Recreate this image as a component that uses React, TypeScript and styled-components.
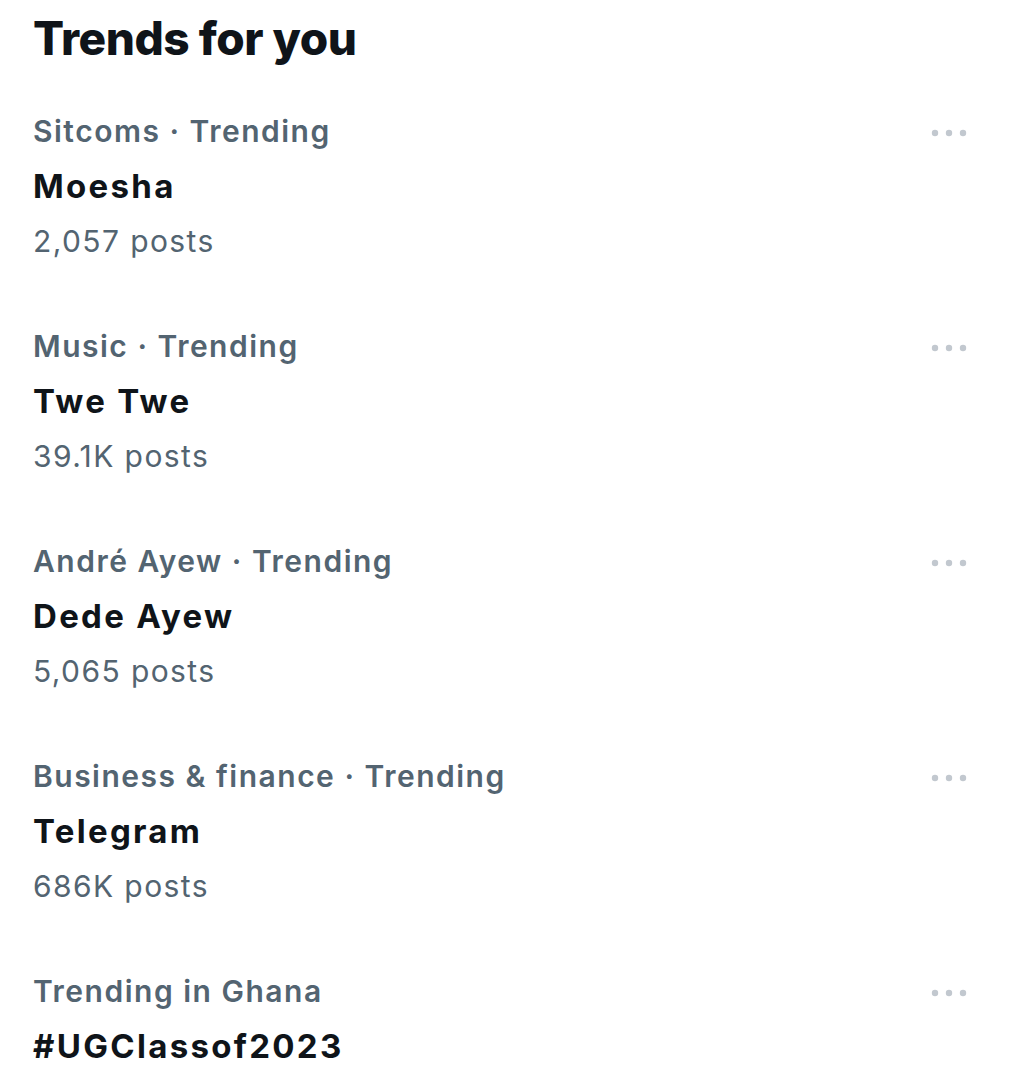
import React from "react";
import styled, { createGlobalStyle } from "styled-components";

const Global = createGlobalStyle`
  html, body { margin: 0; padding: 0; background: #ffffff; }
  body { font-family: Inter, "Noto Sans", "Liberation Sans", sans-serif; -webkit-font-smoothing: antialiased; }
`;

const Page = styled.div`
  display: flex;
  flex-direction: column;
  padding: 10px 56px 0 33px;
  width: 1024px;
  box-sizing: border-box;
  background: #ffffff;
`;

const Title = styled.h2`
  margin: 0 0 13px;
  font-size: 46px;
  line-height: 56px;
  font-weight: 800;
  color: #0f1419;
  letter-spacing: -0.5px;
`;

const List = styled.div`
  display: flex;
  flex-direction: column;
`;

const Trend = styled.div`
  display: flex;
  align-items: flex-start;
  justify-content: space-between;
  padding: 25px 0;
`;

const Body = styled.div`
  display: flex;
  flex-direction: column;
`;

const Line = styled.div<{ $kind: "meta" | "name" | "count" }>`
  line-height: 55px;
  white-space: nowrap;
  font-size: ${(p) => (p.$kind === "name" ? "33px" : "30px")};
  font-weight: ${(p) => (p.$kind === "name" ? 700 : p.$kind === "meta" ? 600 : 400)};
  letter-spacing: ${(p) => (p.$kind === "name" ? "2.3px" : p.$kind === "meta" ? "1.5px" : "1.4px")};
  color: ${(p) => (p.$kind === "name" ? "#0f1419" : "#536471")};
`;

const More = styled.div`
  height: 55px;
  display: flex;
  align-items: center;
  padding-top: 2px;
  box-sizing: border-box;
`;

const Dots = () => (
  <svg width="38" height="10" viewBox="0 0 38 10" aria-hidden="true">
    <circle cx="5" cy="5" r="3.2" fill="#c2c8cf" />
    <circle cx="19" cy="5" r="3.2" fill="#c2c8cf" />
    <circle cx="33" cy="5" r="3.2" fill="#c2c8cf" />
  </svg>
);

const trends = [
  { meta: "Sitcoms · Trending", name: "Moesha", count: "2,057 posts" },
  { meta: "Music · Trending", name: "Twe Twe", count: "39.1K posts" },
  { meta: "André Ayew · Trending", name: "Dede Ayew", count: "5,065 posts" },
  { meta: "Business & finance · Trending", name: "Telegram", count: "686K posts" },
  { meta: "Trending in Ghana", name: "#UGClassof2023", count: "" },
];

export default function App() {
  return (
    <>
      <Global />
      <Page>
        <Title>Trends for you</Title>
        <List>
          {trends.map((t) => (
            <Trend key={t.name}>
              <Body>
                <Line $kind="meta">{t.meta}</Line>
                <Line $kind="name">{t.name}</Line>
                {t.count && <Line $kind="count">{t.count}</Line>}
              </Body>
              <More>
                <Dots />
              </More>
            </Trend>
          ))}
        </List>
      </Page>
    </>
  );
}
